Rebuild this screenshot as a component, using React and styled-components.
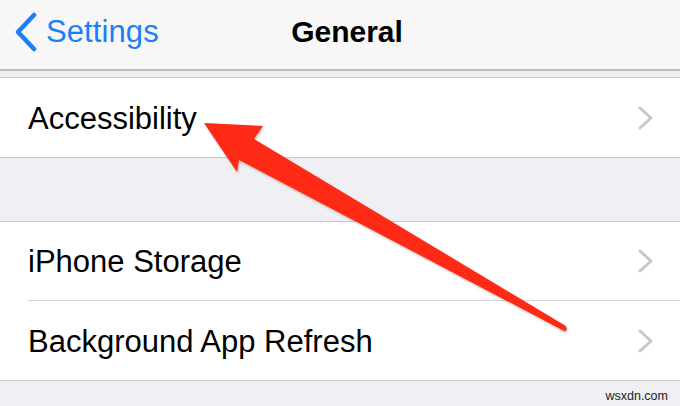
import React from "react";
import styled, { createGlobalStyle } from "styled-components";

const GlobalStyle = createGlobalStyle`
  html, body {
    margin: 0;
    padding: 0;
    background: #efeff4;
  }
  body {
    font-family: "Liberation Sans", Arial, sans-serif;
    -webkit-font-smoothing: antialiased;
  }
`;

const Chevron = () => (
  <ScChevron viewBox="0 0 16 24" width="16" height="24">
    <polyline
      points="2,2 13,12 2,22"
      fill="none"
      stroke="#c7c7cc"
      strokeWidth="3"
      strokeLinecap="round"
      strokeLinejoin="round"
    />
  </ScChevron>
);

const Row = ({ label, last }) => (
  <ScRow $last={last}>
    <span>{label}</span>
    <Chevron />
  </ScRow>
);

const App = () => {
  return (
    <>
      <GlobalStyle />
      <ScScreen>
        <ScNav>
          <ScBack>
            <svg viewBox="0 0 24 40" width="24" height="40">
              <polyline
                points="20,3 4,20 20,37"
                fill="none"
                stroke="#1d7ff6"
                strokeWidth="4.5"
                strokeLinecap="round"
                strokeLinejoin="round"
              />
            </svg>
            <span>Settings</span>
          </ScBack>
          <ScTitle>General</ScTitle>
          <div />
        </ScNav>

        <ScGap $h={6} />
        <ScGroup>
          <Row label="Accessibility" last />
        </ScGroup>

        <ScGap $h={63} />
        <ScGroup>
          <Row label="iPhone Storage" />
          <Row label="Background App Refresh" last />
        </ScGroup>

        <ScArrow viewBox="0 0 680 406" width="680" height="406">
          <defs>
            <filter id="sh" x="-10%" y="-10%" width="120%" height="120%">
              <feDropShadow dx="1" dy="1.5" stdDeviation="1.2" floodColor="#000" floodOpacity="0.25" />
            </filter>
          </defs>
          <path
            d="M204 123 L263 126 L254 139 L565 325.5 Q568.5 328.5 565 331.5 L239 160 L237 172 Z"
            fill="#fe2b12"
            filter="url(#sh)"
          />
        </ScArrow>

        <ScMark>wsxdn.com</ScMark>
      </ScScreen>
    </>
  );
};

export default App;

const ScScreen = styled.div`
  position: relative;
  width: 680px;
  height: 406px;
  overflow: hidden;
  background: #efeff4;
`;

const ScNav = styled.header`
  height: 71px;
  box-sizing: border-box;
  background: #f7f7f8;
  border-bottom: 2px solid #bdbcc2;
  display: grid;
  grid-template-columns: 1fr auto 1fr;
  align-items: center;
  padding: 0 0 6px 14px;
`;

const ScBack = styled.div`
  display: flex;
  align-items: center;
  gap: 8px;
  color: #1d7ff6;
  font-size: 31px;
  letter-spacing: 0.1px;
`;

const ScTitle = styled.h1`
  margin: 0;
  font-size: 30px;
  font-weight: 700;
  color: #000;
`;

const ScGap = styled.div`
  height: ${(p) => p.$h}px;
`;

const ScGroup = styled.section`
  background: #fff;
  border-top: 1px solid #c8c7cc;
  border-bottom: 1px solid #c8c7cc;
`;

const ScRow = styled.div`
  height: 79px;
  box-sizing: border-box;
  margin-left: 28px;
  padding-right: 26px;
  display: flex;
  align-items: center;
  justify-content: space-between;
  font-size: 31px;
  color: #000;
  border-bottom: ${(p) => (p.$last ? "none" : "1px solid #d6d6da")};
  span {
    position: relative;
    top: 1px;
  }
`;

const ScChevron = styled.svg`
  display: block;
`;

const ScArrow = styled.svg`
  position: absolute;
  left: 0;
  top: 0;
  pointer-events: none;
`;

const ScMark = styled.div`
  position: absolute;
  right: 12px;
  bottom: 3px;
  font-size: 12.5px;
  color: #222;
`;
